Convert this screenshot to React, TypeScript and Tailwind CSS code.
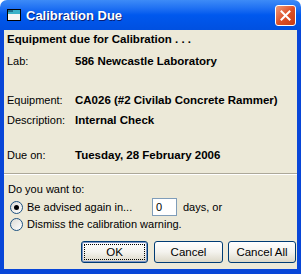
import type { ReactNode } from 'react'

function Row({ label, value, className = '' }: { label: string; value: string; className?: string }) {
  return (
    <div className={`flex h-[13px] items-center ${className}`}>
      <span className="w-[68px]">{label}</span>
      <span className="text-[11.5px] font-bold">{value}</span>
    </div>
  )
}

function Radio({ checked, children }: { checked?: boolean; children: ReactNode }) {
  return (
    <div className="flex items-center gap-[4px]">
      <span className="flex h-[13px] w-[13px] items-center justify-center rounded-full border border-[#1c5180] bg-gradient-to-br from-[#dcdbd5] to-white">
        {checked ? <span className="h-[5px] w-[5px] rounded-full bg-black" /> : null}
      </span>
      <span>{children}</span>
    </div>
  )
}

function XpButton({ children, primary, width }: { children: ReactNode; primary?: boolean; width: string }) {
  return (
    <button
      type="button"
      className={`flex h-[22px] items-center justify-center rounded-[3px] border border-[#003c74] bg-gradient-to-b from-white via-[#f4f3ee] to-[#dcd8c8] text-[11.5px] ${width} ${
        primary ? 'shadow-[inset_0_0_0_1px_#7c96c8]' : ''
      }`}
    >
      {primary ? (
        <span className="flex h-[16px] w-[61px] items-center justify-center border border-dotted border-black">
          {children}
        </span>
      ) : (
        children
      )}
    </button>
  )
}

export default function App() {
  return (
    <div className="flex h-[274px] w-[301px] flex-col font-['Liberation_Sans',sans-serif] text-[11px] leading-[13px] text-black">
      <div className="flex h-[30px] items-center rounded-t-[7px] bg-gradient-to-b from-[#3d8bf7] via-[#0058ee] to-[#0050e0] pl-[7px] pr-[5px]">
        <svg width="14" height="12" viewBox="0 0 14 12" className="mr-[5px]">
          <rect x="0.5" y="0.5" width="13" height="11" fill="#f4f4f4" stroke="#000" />
          <rect x="1" y="1" width="12" height="4" fill="#3ab0c8" />
          <rect x="1" y="1" width="5" height="2" fill="#1c6e8e" />
        </svg>
        <span className="text-[13px] font-bold text-white [text-shadow:1px_1px_0_#0a1f73]">Calibration Due</span>
        <div className="ml-auto flex h-[21px] w-[21px] items-center justify-center rounded-[3px] border border-white bg-gradient-to-br from-[#ec9a7a] via-[#de5128] to-[#c83c14]">
          <svg width="11" height="11" viewBox="0 0 11 11">
            <path d="M1.5 1.5 L9.5 9.5 M9.5 1.5 L1.5 9.5" stroke="#fff" strokeWidth="2" strokeLinecap="square" />
          </svg>
        </div>
      </div>
      <div className="flex flex-1 flex-col border-x-[4px] border-b-[5px] border-[#0846d8] bg-[#ece9d8]">
        <div className="px-[3px] pt-[3px]">
          <div className="text-[11.5px] font-bold">Equipment due for Calibration . . .</div>
          <Row label="Lab:" value="586 Newcastle Laboratory" className="mt-[9px]" />
          <Row label="Equipment:" value="CA026 (#2 Civilab Concrete Rammer)" className="mt-[26px]" />
          <Row label="Description:" value="Internal Check" className="mt-[7px]" />
          <Row label="Due on:" value="Tuesday, 28 February 2006" className="mt-[22px]" />
        </div>
        <div className="mt-[11px] border-t border-b border-t-[#aca899] border-b-white" />
        <div className="px-[4px] pt-[8px]">
          <div>Do you want to:</div>
          <div className="mt-[2px] flex h-[18px] items-center">
            <div className="w-[144px] pl-[2px]">
              <Radio checked>Be advised again in...</Radio>
            </div>
            <div className="flex h-[18px] w-[25px] items-center border border-[#7f9db9] bg-white pl-[3px]">0</div>
            <span className="ml-[6px]">days, or</span>
          </div>
          <div className="mt-[2px] pl-[2px]">
            <Radio>Dismiss the calibration warning.</Radio>
          </div>
        </div>
        <div className="mt-[10px] flex justify-end pr-[1px]">
          <XpButton primary width="w-[67px]">OK</XpButton>
          <div className="w-[6px]" />
          <XpButton width="w-[69px]">Cancel</XpButton>
          <div className="w-[5px]" />
          <XpButton width="w-[68px]">Cancel All</XpButton>
        </div>
      </div>
    </div>
  )
}
